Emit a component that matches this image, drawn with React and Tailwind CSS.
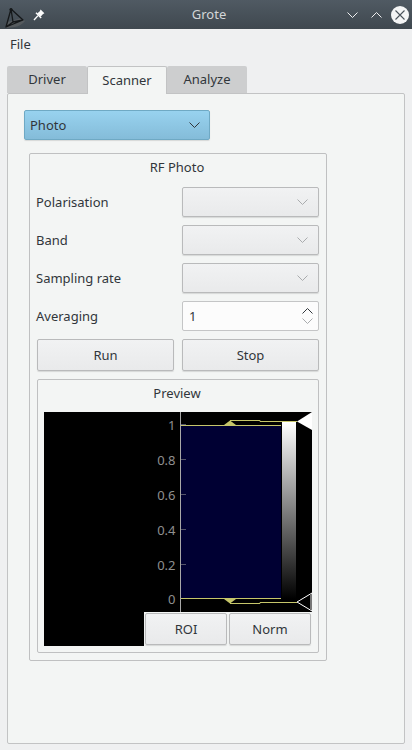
const FONT = { fontFamily: '"Noto Sans", sans-serif' };

function Chevron({ className = "", up = false, color = "#a9abad", w = 11, h = 6 }) {
  return (
    <svg width={w} height={h} viewBox="0 0 11 6" className={className} fill="none">
      <path d={up ? "M0.5 5.5 L5.5 0.5 L10.5 5.5" : "M0.5 0.5 L5.5 5.5 L10.5 0.5"} stroke={color} strokeWidth="1" />
    </svg>
  );
}

function Logo() {
  return (
    <svg width="24" height="24" viewBox="0 0 24 24" fill="none">
      <path d="M6 18 Q14 16 20 14 L24 17 Q20 22 14 23 L5 24 Z" fill="#5b5f61" opacity="0.8" />
      <path d="M10 5 L5 23 L22 16 Z M10 5 L12 18 M5 23 L12 18 L22 16" stroke="#15181a" strokeWidth="1.3" strokeLinejoin="round" />
      <circle cx="10" cy="5.5" r="1.6" fill="#15181a" />
    </svg>
  );
}

function PinIcon() {
  return (
    <svg width="12" height="12" viewBox="0 0 12 12" fill="none">
      <path d="M7.6 0.6 L11.4 4.2 L9.8 5.2 L7.6 7.8 L4.2 4.4 L6.8 2.2 Z" fill="#fcfcfc" />
      <path d="M5 6.6 L1 11" stroke="#fcfcfc" strokeWidth="1.4" />
      <path d="M3 3.8 L8.2 9" stroke="#fcfcfc" strokeWidth="1.4" />
    </svg>
  );
}

function TitleBar() {
  return (
    <div className="h-[29px] flex items-center bg-gradient-to-b from-[#505a63] to-[#3f484f] shrink-0">
      <div className="w-[24px] h-[24px] mt-[3px] ml-[1px]"><Logo /></div>
      <div className="ml-[8px]"><PinIcon /></div>
      <div className="flex-1 text-center text-[13px] text-[#d3d6d8] pl-[26px]">Grote</div>
      <div className="flex items-center gap-[13px] mr-[3px]">
        <Chevron color="#eff0f1" />
        <div className="mr-[-4px]"><Chevron up color="#eff0f1" /></div>
        <div className="w-[18px] h-[18px] rounded-full bg-[#f4f5f5] flex items-center justify-center">
          <svg width="10" height="10" viewBox="0 0 10 10" fill="none">
            <path d="M0.5 0.5 L9.5 9.5 M9.5 0.5 L0.5 9.5" stroke="#4a535a" strokeWidth="1.1" />
          </svg>
        </div>
      </div>
    </div>
  );
}

function Tab({ label, active }) {
  return active ? (
    <div className="w-[80px] h-[28px] mb-[-1px] z-10 flex items-center justify-center bg-[#f3f5f4] border border-b-0 border-[#c2c3c4] rounded-t-[2px] text-[#31363b] text-[13px]">
      {label}
    </div>
  ) : (
    <div className="w-[80px] h-[27px] flex items-center justify-center bg-[#cdcecf] rounded-t-[2px] text-[#31363b] text-[13px]">
      {label}
    </div>
  );
}

function Combo() {
  return (
    <div className="h-[30px] flex items-center justify-end pr-[10px] rounded-[2px] border border-[#b9babb] bg-gradient-to-b from-[#f1f2f3] to-[#e9eaeb] shadow-[0_1px_1px_rgba(0,0,0,0.12)]">
      <Chevron />
    </div>
  );
}

function Btn({ label, className = "" }) {
  return (
    <div className={`flex items-center justify-center pt-[2px] rounded-[2px] border border-[#b9babb] bg-gradient-to-b from-[#f1f2f3] to-[#e9eaeb] shadow-[0_1px_1px_rgba(0,0,0,0.12)] text-[13px] text-[#31363b] ${className}`}>
      {label}
    </div>
  );
}

function Plot() {
  const ticks = [
    ["1", 425], ["0.8", 460], ["0.6", 495], ["0.4", 530], ["0.2", 565], ["0", 599],
  ];
  return (
    <div className="relative w-[268px] h-[234px] bg-black">
      <svg width="268" height="234" viewBox="44 412 268 234" className="block">
        <defs>
          <linearGradient id="lut" x1="0" y1="0" x2="0" y2="1">
            <stop offset="0" stopColor="#ffffff" />
            <stop offset="1" stopColor="#000000" />
          </linearGradient>
        </defs>
        <rect x="181" y="426" width="100" height="172" fill="#000033" />
        <rect x="282" y="422" width="14" height="177" fill="url(#lut)" />
        <path d="M180.5 412 V612" stroke="#a8a8a8" />
        {ticks.map(([t, y]) => (
          <g key={t}>
            <path d={`M181 ${y - 0.5} H186`} stroke="#55556a" />
            <text x="175.5" y={y + 5} textAnchor="end" fill="#8f8f8f" fontSize="13" style={FONT}>{t}</text>
          </g>
        ))}
        <path d="M181 425.5 H281" stroke="#c6c66a" />
        <path d="M224 425 L230 420.5 L236 425 Z" fill="#c6c66a" />
        <path d="M230 420.5 H260 V421.5 H297" stroke="#c6c66a" fill="none" />
        <path d="M297 421.5 L312 412 V430 Z" fill="#ffffff" />
        <path d="M181 598.5 H281" stroke="#c6c66a" />
        <path d="M224 599 L230 603.5 L236 599 Z" fill="#c6c66a" />
        <path d="M230 603.5 H260 V602.5 H297" stroke="#c6c66a" fill="none" />
        <path d="M312 593 L297 602 L312 611 Z" fill="#000" stroke="#ffffff" />
        <path d="M311 595 V609" stroke="#777" strokeWidth="2" />
      </svg>
      <div className="absolute right-0 bottom-0 w-[168px] h-[34px] bg-[#f3f5f4] flex gap-[2px] pl-[1px] pt-[1px] pr-[1px]">
        <Btn label="ROI" className="w-[82px] h-[32px]" />
        <Btn label="Norm" className="w-[82px] h-[32px]" />
      </div>
    </div>
  );
}

export default function App() {
  return (
    <div style={FONT} className="w-[412px] h-[750px] flex flex-col bg-[#eff0f1] text-[13px] text-[#31363b] overflow-hidden">
      <TitleBar />
      <div className="h-[37px] pl-[10px] pt-[6px] leading-[18px] shrink-0">File</div>
      <div className="flex ml-[7px] shrink-0">
        <Tab label="Driver" />
        <Tab label="Scanner" active />
        <Tab label="Analyze" />
      </div>
      <div className="mx-[7px] h-[651px] pl-[16px] pt-[16px] bg-[#f3f5f4] border border-[#c2c3c4] rounded-[2px] shrink-0">
        <div className="w-[186px] h-[30px] flex items-center justify-between pl-[5px] pr-[9px] rounded-[2px] border border-[#6fa9c4] bg-gradient-to-b from-[#98d2ef] to-[#84bcd9] shadow-[0_1px_1px_rgba(0,0,0,0.12)]">
          <span className="pt-[2px]">Photo</span>
          <Chevron color="#31363b" />
        </div>
        <div className="relative mt-[13px] ml-[5px] w-[298px] h-[508px] pl-[7px] pt-[33px] border border-[#bfc0c1] rounded-[2px]">
          <div className="absolute left-0 right-[2px] top-[4px] text-center leading-[18px]">RF Photo</div>
          <div className="grid grid-cols-[137px_137px] gap-x-[8px] gap-y-[8px]">
            <div className="h-[30px] flex items-center ml-[-1px] pt-[2px]">Polarisation</div>
            <Combo />
            <div className="h-[30px] flex items-center ml-[-1px] pt-[2px]">Band</div>
            <Combo />
            <div className="h-[30px] flex items-center ml-[-1px] pt-[2px]">Sampling rate</div>
            <Combo />
            <div className="h-[30px] flex items-center ml-[-1px] pt-[2px]">Averaging</div>
            <div className="h-[30px] flex items-center justify-between pl-[6px] pr-[5px] rounded-[2px] border border-[#c4c5c6] bg-[#fcfcfc]">
              <span className="pt-[2px]">1</span>
              <div className="flex flex-col gap-[4px]">
                <Chevron up color="#31363b" />
                <Chevron color="#a9abad" />
              </div>
            </div>
            <Btn label="Run" className="h-[32px]" />
            <Btn label="Stop" className="h-[32px]" />
          </div>
          <div className="relative mt-[8px] w-[282px] h-[274px] pl-[6px] pt-[32px] border border-[#bfc0c1] rounded-[2px]">
            <div className="absolute left-0 right-[2px] top-[4px] text-center leading-[18px]">Preview</div>
            <Plot />
          </div>
        </div>
      </div>
    </div>
  );
}
